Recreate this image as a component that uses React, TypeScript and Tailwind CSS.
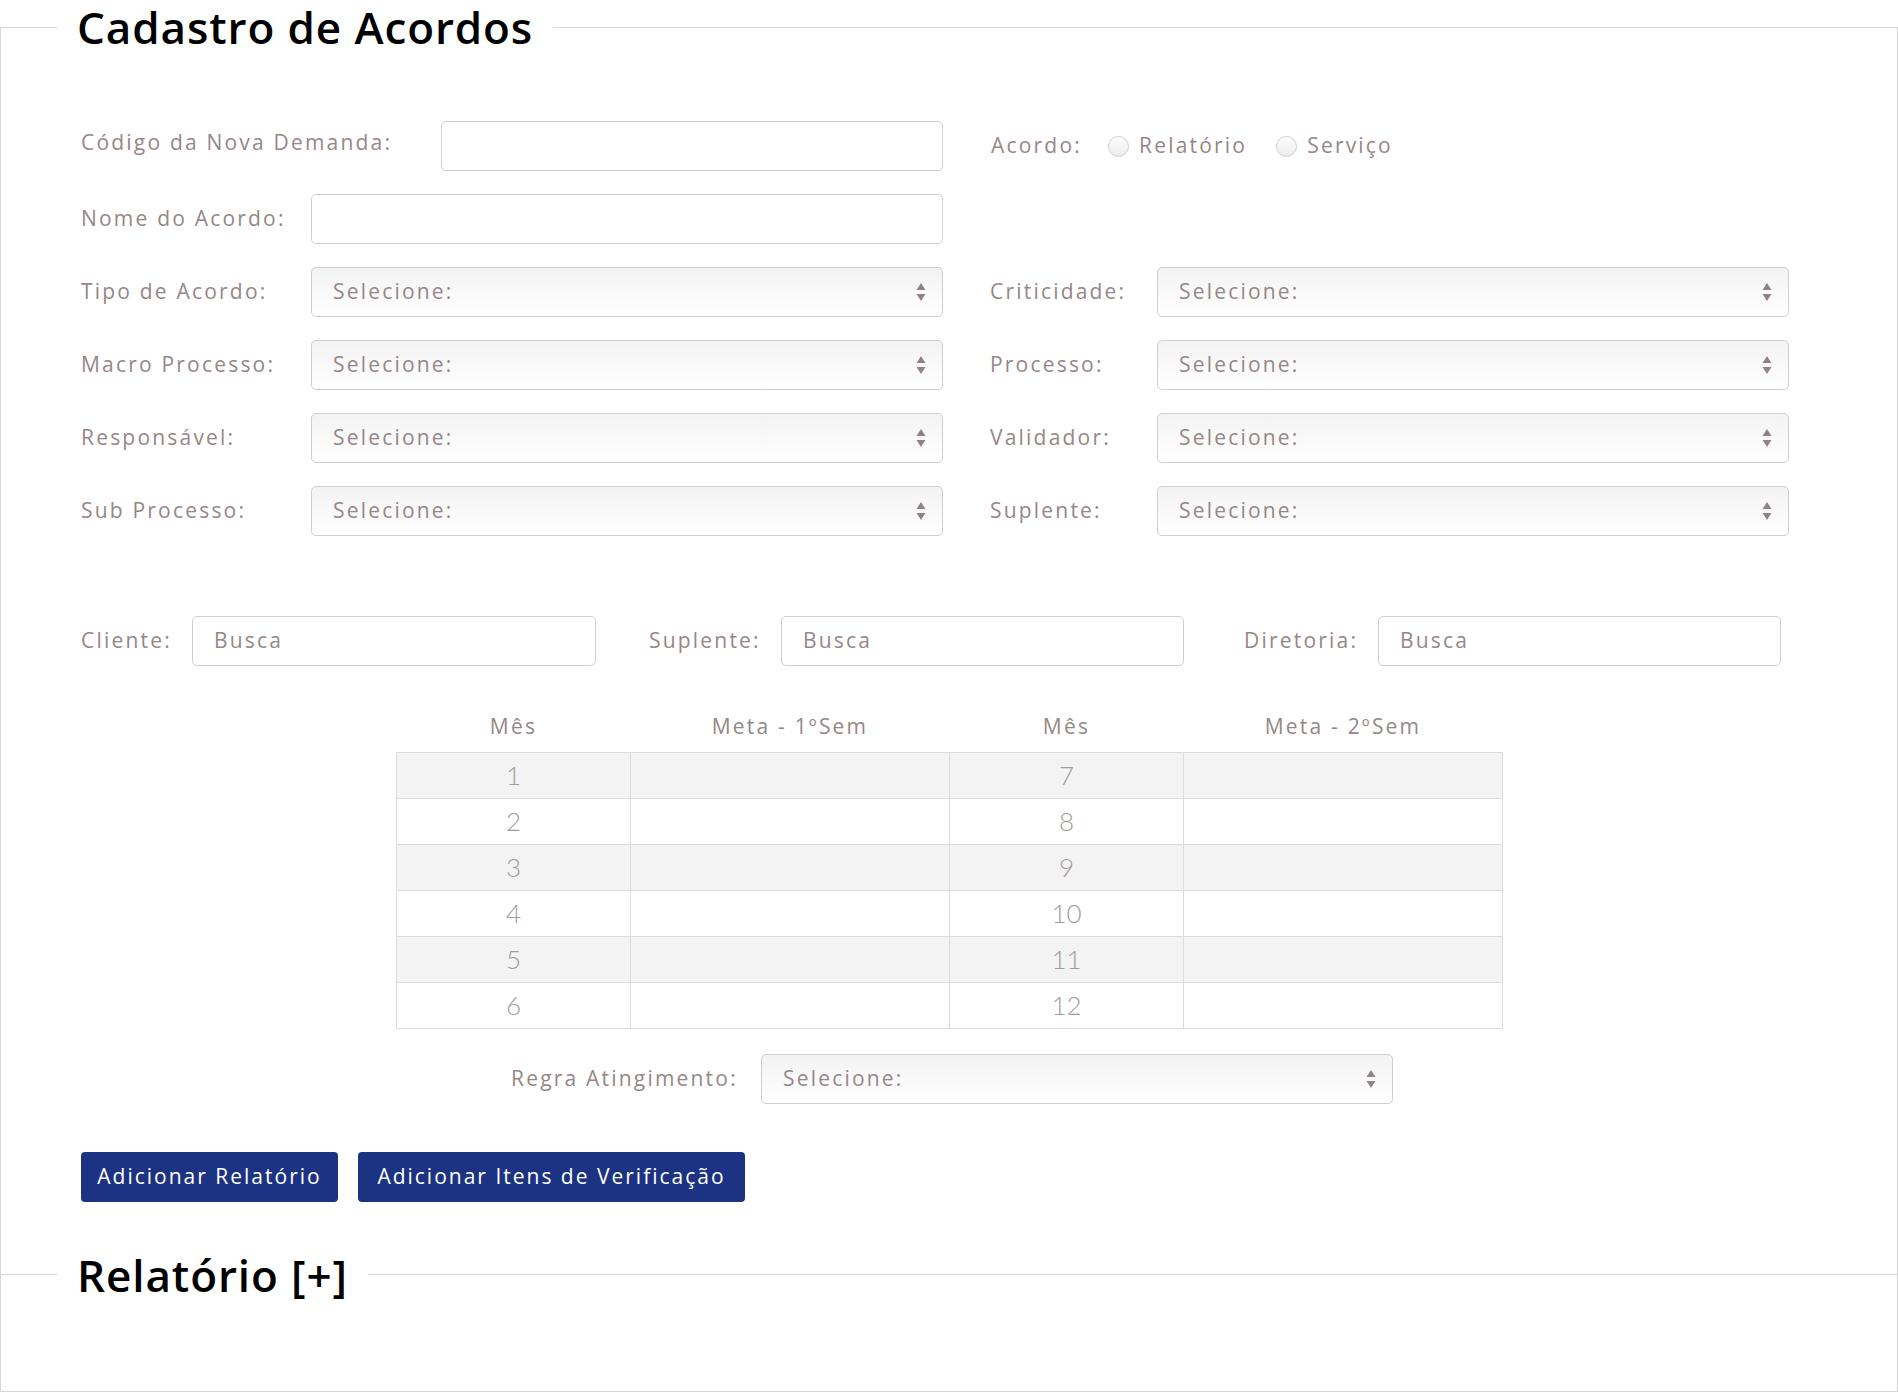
import { ReactNode } from 'react';

const LABEL = "text-[#958787] text-[21px] font-medium tracking-[2.2px] whitespace-nowrap";
const LEGEND = "ml-[56px] px-[20px] text-[44px] leading-[54px] font-semibold text-black tracking-[0.9px]";

function Arrows() {
  return (
    <svg width="10" height="20" viewBox="0 0 10 20" className="shrink-0">
      <path d="M5 1 L9.5 8 L0.5 8 Z" fill="#8f8383" />
      <path d="M5 19 L9.5 12 L0.5 12 Z" fill="#8f8383" />
    </svg>
  );
}

function Select({ w = 'w-[632px]' }: { w?: string }) {
  return (
    <div
      className={`${w} h-[50px] shrink-0 rounded-[5px] border border-[#cfcfcf] bg-gradient-to-b from-[#f3f3f3] to-white flex items-center justify-between pl-[21px] pr-[16px]`}
    >
      <span className={LABEL}>Selecione:</span>
      <Arrows />
    </div>
  );
}

function Input({ w, placeholder }: { w: string; placeholder?: string }) {
  return (
    <div className={`${w} h-[50px] shrink-0 rounded-[5px] border border-[#cfcfcf] bg-white flex items-center pl-[21px]`}>
      {placeholder && <span className={LABEL}>{placeholder}</span>}
    </div>
  );
}

function Label({ w, children }: { w?: string; children: ReactNode }) {
  return <div className={`${w ?? ''} shrink-0 ${LABEL}`}>{children}</div>;
}

function Radio({ label }: { label: string }) {
  return (
    <div className="flex items-center gap-[10px]">
      <span className="w-[21px] h-[21px] rounded-full border border-[#cfcfcf] bg-gradient-to-b from-white to-[#ececec]" />
      <span className={LABEL}>{label}</span>
    </div>
  );
}

const PAIRS: [string, string][] = [
  ['Tipo de Acordo:', 'Criticidade:'],
  ['Macro Processo:', 'Processo:'],
  ['Responsável:', 'Validador:'],
  ['Sub Processo:', 'Suplente:'],
];

const BUTTON = "h-[50px] rounded-[4px] bg-[#1c3282] text-white text-[21px] font-medium tracking-[2px] whitespace-nowrap";

export default function App() {
  return (
    <div className="min-h-screen bg-white font-['Open_Sans',sans-serif]">
      <fieldset className="border border-b-0 border-[#d6d6d6] pb-[73px]">
        <legend className={LEGEND}>Cadastro de Acordos</legend>

        <div className="pl-[80px] pt-[67px]">
          <div className="flex flex-col gap-[23px]">
            <div className="flex items-center h-[50px]">
              <Label w="w-[360px] -mt-[6px]">Código da Nova Demanda:</Label>
              <Input w="w-[502px]" />
              <div className="ml-[48px] flex items-center">
                <Label w="w-[117px]">Acordo:</Label>
                <Radio label="Relatório" />
                <div className="ml-[29px]">
                  <Radio label="Serviço" />
                </div>
              </div>
            </div>

            <div className="flex items-center h-[50px]">
              <Label w="w-[230px]">Nome do Acordo:</Label>
              <Input w="w-[632px]" />
            </div>

            {PAIRS.map(([l, r]) => (
              <div key={l} className="flex items-center h-[50px]">
                <Label w="w-[230px]">{l}</Label>
                <Select />
                <Label w="w-[167px] ml-[47px]">{r}</Label>
                <Select />
              </div>
            ))}
          </div>

          <div className="flex items-center h-[50px] mt-[80px]">
            <Label w="w-[111px]">Cliente:</Label>
            <Input w="w-[404px]" placeholder="Busca" />
            <Label w="w-[132px] ml-[53px]">Suplente:</Label>
            <Input w="w-[403px]" placeholder="Busca" />
            <Label w="w-[134px] ml-[60px]">Diretoria:</Label>
            <Input w="w-[403px]" placeholder="Busca" />
          </div>

          <table className="mt-[36px] ml-[315px] border-collapse">
            <thead>
              <tr className="h-[50px]">
                {['Mês', 'Meta - 1ºSem', 'Mês', 'Meta - 2ºSem'].map((h, i) => (
                  <th
                    key={i}
                    className={`${i % 2 === 0 ? 'w-[234px]' : 'w-[319px]'} text-center ${LABEL}`}
                  >
                    {h}
                  </th>
                ))}
              </tr>
            </thead>
            <tbody>
              {[1, 2, 3, 4, 5, 6].map((n) => (
                <tr key={n} className={`h-[46px] ${n % 2 === 1 ? 'bg-[#f3f3f3]' : 'bg-white'}`}>
                  <td className="border border-[#dcdcdc] text-center text-[26px] font-['Lato',sans-serif] font-light text-[#a39b9b]">
                    {n}
                  </td>
                  <td className="border border-[#dcdcdc]" />
                  <td className="border border-[#dcdcdc] text-center text-[26px] font-['Lato',sans-serif] font-light text-[#a39b9b]">
                    {n + 6}
                  </td>
                  <td className="border border-[#dcdcdc]" />
                </tr>
              ))}
            </tbody>
          </table>

          <div className="flex items-center h-[50px] mt-[25px] ml-[430px]">
            <Label w="w-[250px]">Regra Atingimento:</Label>
            <Select />
          </div>

          <div className="flex gap-[20px] mt-[48px]">
            <button className={`${BUTTON} w-[257px]`}>Adicionar Relatório</button>
            <button className={`${BUTTON} w-[387px]`}>Adicionar Itens de Verificação</button>
          </div>
        </div>
      </fieldset>

      <fieldset className="-mt-[27px] relative border border-[#d6d6d6] pb-[89px]">
        <legend className={LEGEND}>Relatório [+]</legend>
      </fieldset>
    </div>
  );
}
